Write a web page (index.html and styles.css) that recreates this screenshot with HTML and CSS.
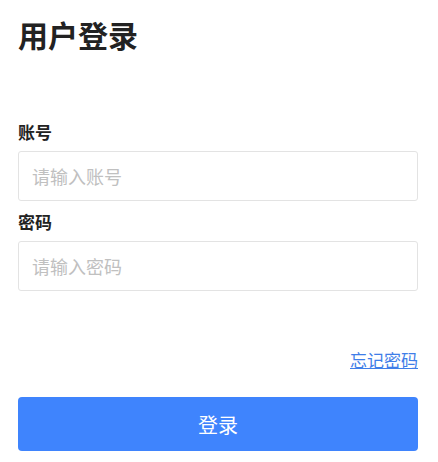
FILE: index.html
```
<!DOCTYPE html>
<html lang="zh-CN">
  <head>
    <meta charset="UTF-8" />
    <meta name="viewport" content="width=device-width, initial-scale=1.0" />
    <title>用户登录</title>
    <link rel="stylesheet" href="styles.css">
  </head>
  <body>
    <div class="login">
      <h1 class="title">用户登录</h1>
      <form class="form">
        <div class="field">
          <label class="label">账号</label>
          <input class="input" type="text" placeholder="请输入账号" />
        </div>
        <div class="field">
          <label class="label">密码</label>
          <input class="input" type="password" placeholder="请输入密码" />
        </div>
        <div class="extra">
          <a class="forget" href="#">忘记密码</a>
        </div>
        <button class="submit" type="button">登录</button>
      </form>
    </div>
  </body>
</html>
```

FILE: styles.css
```
* {
  margin: 0;
  padding: 0;
  box-sizing: border-box;
}
body {
  background: #fff;
  font-family: "Noto Sans CJK SC", "Liberation Sans", sans-serif;
  color: #222;
}
.login {
  width: 400px;
  margin-left: 18px;
}
.title {
  padding-top: 13px;
  font-size: 30px;
  line-height: 42px;
  font-weight: 700;
}
.form {
  margin-top: 65px;
}
.field {
  margin-bottom: 9px;
}
.label {
  display: block;
  font-size: 17px;
  line-height: 24px;
  font-weight: 700;
  margin-bottom: 7px;
}
.input {
  display: block;
  width: 100%;
  height: 50px;
  padding: 0 13px;
  border: 1px solid #e3e3e3;
  border-radius: 3px;
  font-family: inherit;
  font-size: 18px;
  color: #333;
  outline: none;
}
.input::placeholder {
  color: #c0c0c0;
}
.extra {
  display: flex;
  justify-content: flex-end;
  margin-top: 57px;
}
.forget {
  font-size: 17px;
  line-height: 24px;
  color: #3f7ee8;
  text-decoration: underline;
}
.submit {
  display: block;
  width: 100%;
  height: 54px;
  margin-top: 25px;
  border: none;
  border-radius: 4px;
  background: #3f84fd;
  color: #fff;
  font-family: inherit;
  font-size: 20px;
}
```
